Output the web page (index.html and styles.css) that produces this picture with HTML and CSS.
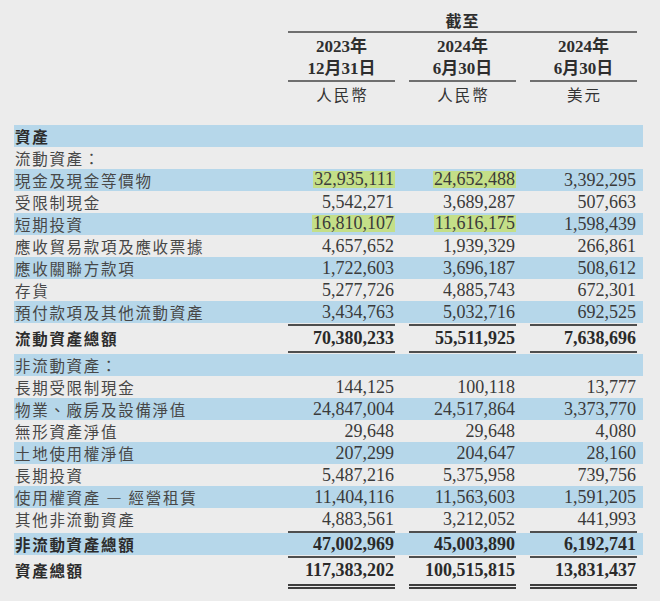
FILE: index.html
```html
<!DOCTYPE html>
<html lang="zh-Hant">
<head>
<meta charset="utf-8">
<title>資產</title>
<link rel="stylesheet" href="styles.css">
</head>
<body>
<div class="sheet">
  <div class="row"><div></div><div class="asof">截至</div></div>
  <div class="row years">
    <div></div>
    <div class="hcell">2023年<br>12月31日</div>
    <div class="hcell">2024年<br>6月30日</div>
    <div class="hcell">2024年<br>6月30日</div>
  </div>
  <div class="row cur">
    <div></div>
    <div class="ccell">人民幣</div>
    <div class="ccell">人民幣</div>
    <div class="ccell">美元</div>
  </div>

  <div class="row data band first"><div class="lbl bold">資產</div><div></div><div></div><div></div></div>
  <div class="row data"><div class="lbl">流動資產：</div><div></div><div></div><div></div></div>
  <div class="row data band"><div class="lbl">現金及現金等價物</div><div class="num"><span class="hl">32,935,111</span></div><div class="num"><span class="hl">24,652,488</span></div><div class="num">3,392,295</div></div>
  <div class="row data"><div class="lbl">受限制現金</div><div class="num">5,542,271</div><div class="num">3,689,287</div><div class="num">507,663</div></div>
  <div class="row data band"><div class="lbl">短期投資</div><div class="num"><span class="hl">16,810,107</span></div><div class="num"><span class="hl">11,616,175</span></div><div class="num">1,598,439</div></div>
  <div class="row data"><div class="lbl">應收貿易款項及應收票據</div><div class="num">4,657,652</div><div class="num">1,939,329</div><div class="num">266,861</div></div>
  <div class="row data band"><div class="lbl">應收關聯方款項</div><div class="num">1,722,603</div><div class="num">3,696,187</div><div class="num">508,612</div></div>
  <div class="row data"><div class="lbl">存貨</div><div class="num">5,277,726</div><div class="num">4,885,743</div><div class="num">672,301</div></div>
  <div class="row data band"><div class="lbl">預付款項及其他流動資產</div><div class="num">3,434,763</div><div class="num">5,032,716</div><div class="num">692,525</div></div>
  <div class="row rule r4"><div></div><i></i><i></i><i></i></div>
  <div class="row data total"><div class="lbl bold">流動資產總額</div><div class="num">70,380,233</div><div class="num">55,511,925</div><div class="num">7,638,696</div></div>
  <div class="row rule r5"><div></div><i></i><i></i><i></i></div>
  <div class="row data band"><div class="lbl">非流動資產：</div><div></div><div></div><div></div></div>
  <div class="row data"><div class="lbl">長期受限制現金</div><div class="num">144,125</div><div class="num">100,118</div><div class="num">13,777</div></div>
  <div class="row data band"><div class="lbl">物業、廠房及設備淨值</div><div class="num">24,847,004</div><div class="num">24,517,864</div><div class="num">3,373,770</div></div>
  <div class="row data"><div class="lbl">無形資產淨值</div><div class="num">29,648</div><div class="num">29,648</div><div class="num">4,080</div></div>
  <div class="row data band"><div class="lbl">土地使用權淨值</div><div class="num">207,299</div><div class="num">204,647</div><div class="num">28,160</div></div>
  <div class="row data"><div class="lbl">長期投資</div><div class="num">5,487,216</div><div class="num">5,375,958</div><div class="num">739,756</div></div>
  <div class="row data band"><div class="lbl">使用權資產 — 經營租賃</div><div class="num">11,404,116</div><div class="num">11,563,603</div><div class="num">1,591,205</div></div>
  <div class="row data"><div class="lbl">其他非流動資產</div><div class="num">4,883,561</div><div class="num">3,212,052</div><div class="num">441,993</div></div>
  <div class="row rule r3"><div></div><i></i><i></i><i></i></div>
  <div class="row data band total"><div class="lbl bold">非流動資產總額</div><div class="num">47,002,969</div><div class="num">45,003,890</div><div class="num">6,192,741</div></div>
  <div class="row rule r4"><div></div><i></i><i></i><i></i></div>
  <div class="row data total"><div class="lbl bold">資產總額</div><div class="num">117,383,202</div><div class="num">100,515,815</div><div class="num">13,831,437</div></div>
  <div class="row rule dbl"><div></div><i></i><i></i><i></i></div>
</div>
</body>
</html>
```
FILE: styles.css
```css
html, body {
  margin: 0;
  padding: 0;
  background: #ececec;
}

body {
  width: 660px;
  height: 601px;
  overflow: hidden;
  font-family: "Liberation Serif", "Noto Sans CJK TC", serif;
  color: #3b3b3b;
}

.sheet {
  margin-left: 14px;
  width: 629px;
}

.row {
  display: grid;
  grid-template-columns: 260px 107px 107px 107px;
  column-gap: 14px;
  padding-right: 6px;
}

.asof {
  grid-column: 2 / 5;
  text-align: center;
  font-family: "Noto Sans CJK TC", sans-serif;
  font-weight: 700;
  font-size: 16px;
  line-height: 20px;
  letter-spacing: 1px;
  padding-top: 10px;
  padding-bottom: 1px;
  border-bottom: 2px solid #6f6f6f;
  color: #2e2e2e;
}

.years {
  margin-top: 3px;
}

.hcell {
  text-align: center;
  font-family: "Liberation Serif", "Noto Sans CJK TC", serif;
  font-weight: 700;
  font-size: 17px;
  line-height: 22px;
  border-bottom: 2px solid #6f6f6f;
  color: #2e2e2e;
}

.ccell {
  text-align: center;
  font-family: "Noto Sans CJK TC", sans-serif;
  font-size: 15.5px;
  line-height: 22px;
  letter-spacing: 2px;
  padding-left: 2px;
  margin-top: 1px;
  color: #333;
}

.first {
  margin-top: 20px;
}

.data {
  height: 22px;
  line-height: 22px;
}

.band {
  background: #b6d7ea;
}

.lbl {
  font-family: "Noto Sans CJK TC", sans-serif;
  font-size: 15.5px;
  letter-spacing: 1.7px;
  padding-left: 1px;
  color: #474747;
  white-space: nowrap;
}

.lbl.bold {
  font-weight: 700;
  color: #2c2c2c;
}

.num {
  text-align: right;
  font-size: 18px;
  padding-right: 1px;
  color: #3a3a3a;
  white-space: nowrap;
}

.total .num {
  font-weight: 700;
  color: #2a2a2a;
}

.hl {
  display: inline-block;
  background: #c4df88;
  line-height: 17px;
  padding: 0 1px;
  margin-right: -1px;
  vertical-align: 1px;
}

.rule {
  align-items: center;
}

.rule i {
  display: block;
  border-top: 2px solid #4e4e4e;
}

.r3 { height: 3px; }
.r4 { height: 4px; }
.r5 { height: 5px; }

.dbl {
  height: 10px;
  align-items: start;
}

.dbl i {
  margin-top: 3px;
  border-top: 5px double #3e3e3e;
}
```
